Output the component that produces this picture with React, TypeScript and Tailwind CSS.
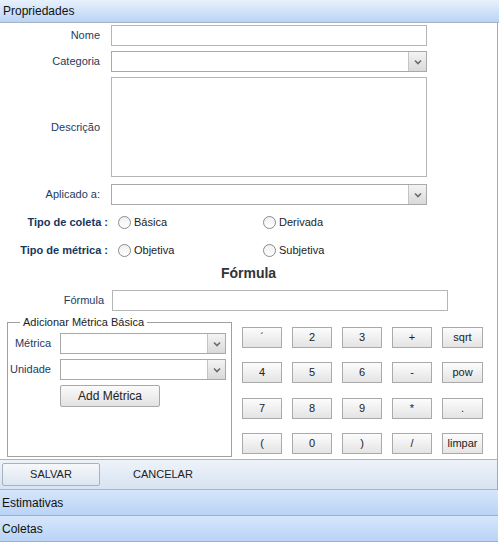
import React from 'react';

const font = { fontFamily: '"Liberation Sans", Arial, sans-serif' };

function SelectBox({ className = '' }: { className?: string }) {
  return (
    <div className={`flex h-[21px] border border-[#a9a9a9] bg-white ${className}`}>
      <div className="flex-1" />
      <div className="flex w-[18px] items-center justify-center border-l border-[#c4c4c4] bg-gradient-to-b from-[#f4f4f4] to-[#d9d9d9]">
        <svg width="8" height="6" viewBox="0 0 8 6">
          <path d="M1 1.5 L4 4.5 L7 1.5" fill="none" stroke="#6b6b6b" strokeWidth="1.6" />
        </svg>
      </div>
    </div>
  );
}

function Radio({ label }: { label: string }) {
  return (
    <div className="flex items-center gap-[3px]">
      <span className="h-[13px] w-[13px] rounded-full border border-[#8a8a8a] bg-gradient-to-b from-[#f0f0f0] to-white" />
      <span className="text-[11px] text-[#222]">{label}</span>
    </div>
  );
}

const keys = ['´', '2', '3', '+', 'sqrt', '4', '5', '6', '-', 'pow', '7', '8', '9', '*', '.', '(', '0', ')', '/', 'limpar'];

export default function App() {
  return (
    <div className="h-[543px] w-[499px] bg-white" style={font}>
      {/* header */}
      <div className="flex h-[23px] items-center border-b border-[#a7b3c2] bg-gradient-to-b from-[#e8f1fc] to-[#bad4f5] pl-[3px] text-[12px] text-[#111]">
        Propriedades
      </div>

      <div className="w-[498px] border-r border-[#a9a9a9]">
        <div className="flex flex-col pt-[2px]">
          <div className="flex items-center">
            <div className="w-[101px] pr-[1px] text-right text-[11px] text-[#1e3b5e]">Nome</div>
            <div className="ml-[10px] h-[21px] w-[316px] border border-[#b5b5b5] bg-white" />
          </div>
          <div className="mt-[5px] flex items-center">
            <div className="w-[101px] pr-[1px] text-right text-[11px] text-[#1e3b5e]">Categoria</div>
            <SelectBox className="ml-[10px] w-[316px]" />
          </div>
          <div className="mt-[5px] flex items-center">
            <div className="w-[101px] pr-[1px] text-right text-[11px] text-[#1e3b5e]">Descrição</div>
            <div className="ml-[10px] h-[100px] w-[316px] border border-[#b5b5b5] bg-white" />
          </div>
          <div className="mt-[7px] flex items-center">
            <div className="w-[101px] pr-[1px] text-right text-[11px] text-[#1e3b5e]">Aplicado a:</div>
            <SelectBox className="ml-[10px] w-[316px]" />
          </div>

          <div className="mt-[9px] flex h-[16px] items-center">
            <div className="w-[108px] text-right text-[11px] font-bold text-[#163660]">Tipo de coleta :</div>
            <div className="ml-[10px] w-[145px]"><Radio label="Básica" /></div>
            <Radio label="Derivada" />
          </div>
          <div className="mt-[12px] flex h-[16px] items-center">
            <div className="w-[108px] text-right text-[11px] font-bold text-[#163660]">Tipo de métrica :</div>
            <div className="ml-[10px] w-[145px]"><Radio label="Objetiva" /></div>
            <Radio label="Subjetiva" />
          </div>

          <div className="mt-[7px] text-center text-[14px] font-bold leading-[17px] text-[#333]">Fórmula</div>

          <div className="mt-[8px] flex items-center">
            <div className="w-[104px] text-right text-[11px] text-[#1e3b5e]">Fórmula</div>
            <div className="ml-[8px] h-[21px] w-[336px] border border-[#b5b5b5] bg-white" />
          </div>

          <div className="mt-[5px] flex">
            {/* fieldset */}
            <fieldset className="ml-[7px] h-[141px] w-[225px] border border-[#a0a0a0] px-[2px] pb-0 pt-0">
              <legend className="ml-[10px] px-[3px] text-[11px] leading-[13px] text-[#222]">Adicionar Métrica Básica</legend>
              <div className="mt-[4px] flex items-center">
                <div className="w-[41px] text-right text-[11px] text-[#1e3b5e]">Métrica</div>
                <SelectBox className="ml-[9px] w-[166px]" />
              </div>
              <div className="mt-[5px] flex items-center">
                <div className="w-[41px] text-right text-[11px] text-[#1e3b5e]">Unidade</div>
                <SelectBox className="ml-[9px] w-[166px]" />
              </div>
              <button className="ml-[50px] mt-[5px] h-[22px] w-[100px] rounded-[2px] border border-[#a8a8a8] bg-gradient-to-b from-[#fbfbfb] to-[#e2e2e2] text-[12px] text-[#222]">
                Add Métrica
              </button>
            </fieldset>

            {/* keypad */}
            <div className="ml-[10px] mt-[11px] grid grid-cols-[40px_40px_40px_40px_41px] gap-x-[10px] gap-y-[11px]">
              {keys.map((k) => (
                <button
                  key={k}
                  className="h-[21px] border border-[#aaaaaa] bg-gradient-to-b from-[#fcfcfc] to-[#e4e4e4] text-[11px] leading-none text-[#222]"
                >
                  {k}
                </button>
              ))}
            </div>
          </div>
        </div>

        {/* footer bar */}
        <div className="mt-[2px] flex h-[31px] items-center border-y border-[#a9b5c4] bg-gradient-to-b from-[#eef3fa] to-[#d7e3f2] pl-[2px]">
          <button className="h-[23px] w-[98px] rounded-[2px] border border-[#a6b2c0] bg-gradient-to-b from-[#f6f8fb] to-[#dce5f0] text-[11px] text-[#222]">
            SALVAR
          </button>
          <span className="ml-[33px] text-[11px] text-[#222]">CANCELAR</span>
        </div>
      </div>

      <div className="flex h-[26px] w-[498px] items-center border-b border-[#9fafc3] bg-gradient-to-b from-[#d6e6fb] to-[#b9d4f6] pl-[2px] text-[12px] text-[#111]">
        Estimativas
      </div>
      <div className="flex h-[26px] w-[498px] items-center border-b border-[#9fafc3] bg-gradient-to-b from-[#d6e6fb] to-[#b9d4f6] pl-[2px] text-[12px] text-[#111]">
        Coletas
      </div>
    </div>
  );
}
